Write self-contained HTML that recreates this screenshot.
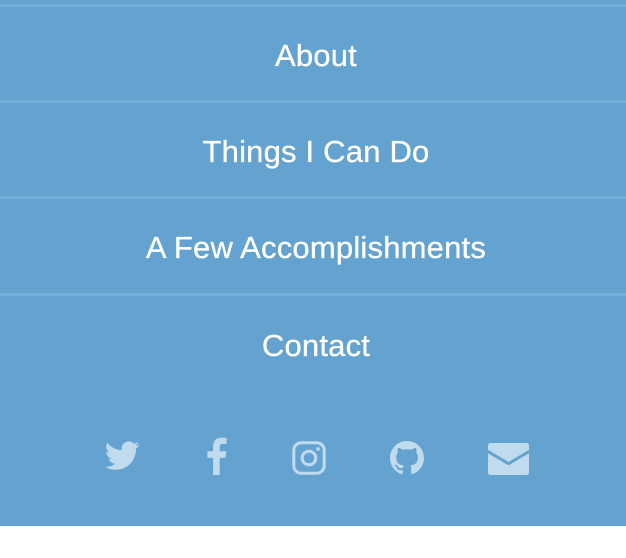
<!DOCTYPE html>
<html><head><meta charset="utf-8"><style>
html,body{margin:0;padding:0;background:#fff;width:626px;height:558px;overflow:hidden}
.wrap{position:absolute;left:0;top:0;width:626px;height:526px;background:#64a3d0}
.sep{position:absolute;left:0;width:626px;height:3px;background:#74aedb}
.t{position:absolute;left:3px;width:626px;text-align:center;color:#fff;font-family:"Liberation Sans",sans-serif;font-size:31px;line-height:40px;letter-spacing:0.2px;-webkit-text-stroke:0.3px #fff}
.ic{position:absolute;fill:#c0daee}
</style></head><body>
<div class="wrap">
<div class="sep" style="top:4px"></div>
<div class="sep" style="top:100px"></div>
<div class="sep" style="top:196px"></div>
<div class="sep" style="top:293px"></div>
<div class="t" style="top:36px">About</div>
<div class="t" style="top:132px">Things I Can Do</div>
<div class="t" style="top:228px">A Few Accomplishments</div>
<div class="t" style="top:326px">Contact</div>

<svg class="ic" style="left:105px;top:441px" width="35" height="32" viewBox="0 0 24 22"><path d="M23.6 2.6c-.9.4-1.8.6-2.8.8 1-.6 1.8-1.6 2.1-2.7-.9.6-2 1-3.1 1.2C18.9.9 17.7.3 16.3.3c-2.7 0-4.9 2.2-4.9 4.9 0 .4 0 .8.1 1.1C7.5 6.1 3.9 4.2 1.5 1.2c-.4.7-.7 1.6-.7 2.5 0 1.7.9 3.2 2.2 4.1-.8 0-1.6-.2-2.2-.6v.1c0 2.4 1.7 4.4 3.9 4.8-.4.1-.8.2-1.3.2-.3 0-.6 0-.9-.1.6 2 2.4 3.4 4.6 3.4-1.7 1.3-3.8 2.1-6.1 2.1-.4 0-.8 0-1.2-.1 2.2 1.4 4.8 2.2 7.5 2.2 9.1 0 14-7.5 14-14v-.6c1-.7 1.8-1.6 2.4-2.6z"/></svg>

<svg class="ic" style="left:206px;top:437px" width="21" height="38" viewBox="0 0 11 20"><path d="M7.2 20V11h3l.5-3.5H7.2V5.3c0-1 .3-1.7 1.7-1.7h1.9V.5C10.5.4 9.4.3 8.2.3 5.5.3 3.7 1.9 3.7 4.9v2.6H.7V11h3v9z"/></svg>

<svg style="position:absolute;left:292px;top:441px" width="34" height="34" viewBox="0 0 34 34" fill="none" stroke="#c0daee"><rect x="1.8" y="1.8" width="30.4" height="30.4" rx="7.5" stroke-width="3"/><circle cx="17" cy="17" r="6.8" stroke-width="3"/><circle cx="26" cy="8" r="1.9" fill="#c0daee" stroke="none"/></svg>

<svg class="ic" style="left:390px;top:441px" width="34" height="34" viewBox="0 0 16 16"><path d="M8 0C3.58 0 0 3.58 0 8c0 3.54 2.29 6.53 5.47 7.59.4.07.55-.17.55-.38 0-.19-.01-.82-.01-1.49-2.01.37-2.53-.49-2.69-.94-.09-.23-.48-.94-.82-1.13-.28-.15-.68-.52-.01-.53.63-.01 1.08.58 1.23.82.72 1.21 1.87.87 2.33.66.07-.52.28-.87.51-1.07-1.78-.2-3.64-.89-3.640-3.95 0-.87.31-1.59.82-2.15-.08-.2-.36-1.02.08-2.12 0 0 .67-.21 2.2.82.64-.18 1.32-.27 2-.27.68 0 1.36.09 2 .27 1.53-1.04 2.2-.82 2.2-.82.44 1.1.16 1.92.08 2.12.51.56.82 1.27.82 2.15 0 3.07-1.87 3.75-3.65 3.95.29.25.54.73.54 1.48 0 1.07-.01 1.93-.01 2.2 0 .21.15.46.55.38A8.013 8.013 0 0016 8c0-4.42-3.58-8-8-8z"/></svg>

<svg class="ic" style="left:488px;top:443px" width="41" height="32" viewBox="0 0 41 32"><path d="M2.5 0h36A2.5 2.5 0 0 1 41 2.5v4.3L20.5 19 0 6.8V2.5A2.5 2.5 0 0 1 2.5 0z"/><path d="M0 10.2L20.5 22.4 41 10.2v19.3a2.5 2.5 0 0 1-2.5 2.5h-36A2.5 2.5 0 0 1 0 29.5z"/></svg>
</div>
</body></html>
